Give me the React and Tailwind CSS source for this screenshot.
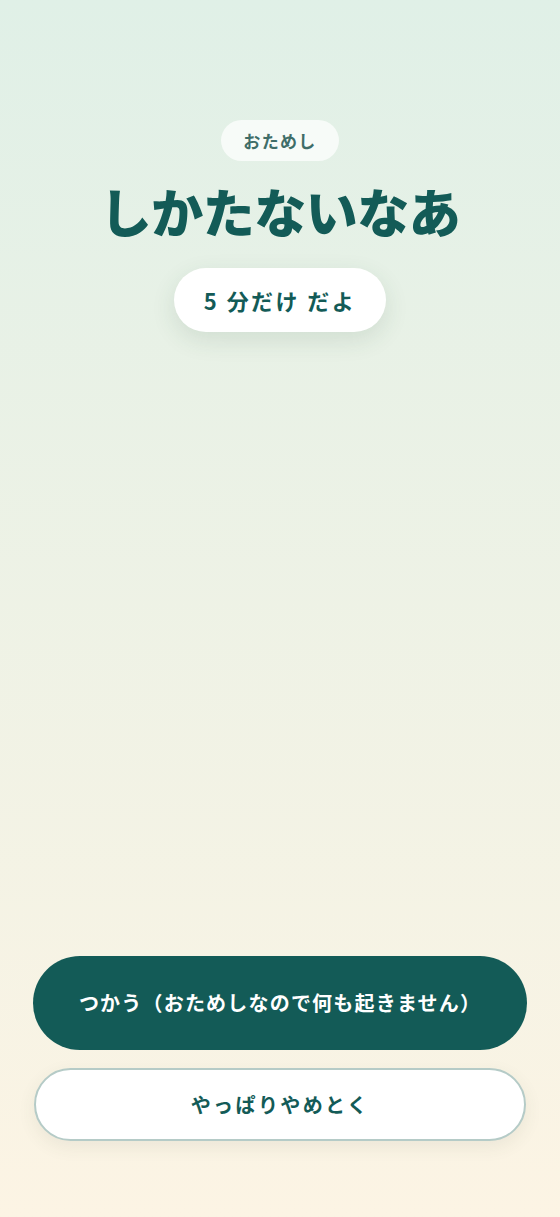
import React from 'react';

export default function App() {
  return (
    <div
      className="min-h-[1217px] w-full flex flex-col items-center bg-gradient-to-b from-[#e0f0e7] to-[#fcf4e4] px-[33px]"
      style={{ fontFamily: '"Noto Sans CJK JP", "Noto Sans", sans-serif' }}
    >
      <div className="mt-[120px] h-[41px] px-[22px] flex items-center rounded-full bg-white/70 text-[17px] font-bold text-[#3f6d68] tracking-[0.08em]">
        おためし
      </div>
      <h1 className="mt-[18px] text-[52px] leading-[64px] font-black text-[#135b57] tracking-[-0.01em]">
        しかたないなあ
      </h1>
      <div className="mt-[25px] h-[64px] px-[30px] flex items-center rounded-full bg-white shadow-[0_8px_24px_rgba(40,80,60,0.12)] text-[22px] font-bold text-[#135b57] tracking-[0.11em]">
        5 分だけ だよ
      </div>

      <div className="flex-1" />

      <div className="w-full flex flex-col gap-[18px] mb-[76px]">
        <button className="w-full h-[94px] rounded-full bg-[#135b57] text-white text-[20px] font-bold tracking-[0.06em]">
          つかう（おためしなので何も起きません）
        </button>
        <button className="w-[492px] mx-auto h-[73px] rounded-full bg-white border-2 border-[#b5cbc7] text-[#135b57] text-[20px] font-bold tracking-[0.12em] shadow-[0_6px_18px_rgba(60,80,60,0.08)]">
          やっぱりやめとく
        </button>
      </div>
    </div>
  );
}
